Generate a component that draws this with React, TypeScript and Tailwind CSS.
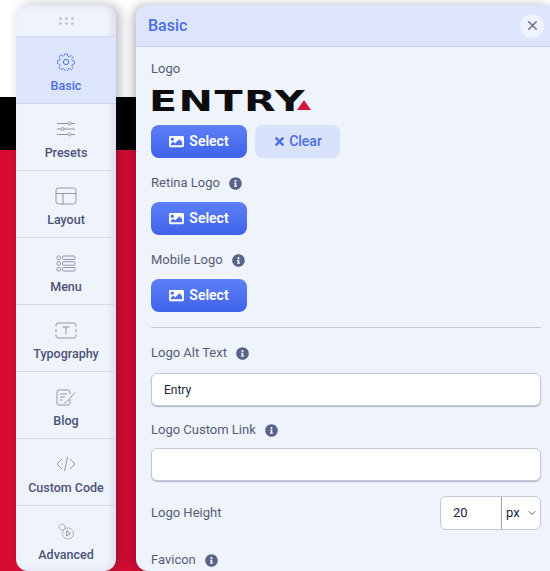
import React from 'react';
import { ChevronDown, X } from 'lucide-react';
import { FaImage, FaInfoCircle, FaTimes } from 'react-icons/fa';

const stroke = { fill: 'none', stroke: 'currentColor', strokeWidth: 1 };

const GearIcon = () => (
  <svg width="18" height="18" viewBox="0 0 18 18" {...stroke}>
    <circle cx="9" cy="9" r="2.6" />
    <path
      strokeDasharray="2 0.6"
      d="M7.6 1h2.8l.4 2.2 1.4.6 1.9-1.3 2 2-1.3 1.9.6 1.4 2.1.4v2.8l-2.1.4-.6 1.4 1.3 1.9-2 2-1.9-1.3-1.4.6-.4 2.1H7.6l-.4-2.1-1.4-.6-1.9 1.3-2-2 1.3-1.9-.6-1.4L.5 10.4V7.6l2.1-.4.6-1.4-1.3-1.9 2-2 1.9 1.3 1.4-.6z"
    />
  </svg>
);

const PresetsIcon = () => (
  <svg width="20" height="16" viewBox="0 0 20 16" {...stroke}>
    <path d="M1 2.500h11M15 2.500h4M1 8h4M8 8h11M1 13.500h11M15 13.500h4" />
    <circle cx="13.500" cy="2.500" r="1.500" />
    <circle cx="6.500" cy="8" r="1.500" />
    <circle cx="13.500" cy="13.500" r="1.500" />
  </svg>
);

const LayoutIcon = () => (
  <svg width="22" height="18" viewBox="0 0 22 18" {...stroke}>
    <rect x="1" y="1" width="20" height="16" rx="2.500" />
    <path d="M1 6.500h20M8 6.500V17" />
  </svg>
);

const MenuIcon = () => (
  <svg width="20" height="17" viewBox="0 0 20 17" {...stroke}>
    <rect x="1" y="1" width="3.500" height="3.500" rx="1" />
    <rect x="1" y="6.700" width="3.500" height="3.500" rx="1" />
    <rect x="1" y="12.500" width="3.500" height="3.500" rx="1" />
    <rect x="6.500" y="1" width="12.500" height="3.500" rx="1" />
    <rect x="6.500" y="6.700" width="12.500" height="3.500" rx="1" />
    <rect x="6.500" y="12.500" width="12.500" height="3.500" rx="1" />
  </svg>
);

const TypographyIcon = () => (
  <svg width="22" height="17" viewBox="0 0 22 17" {...stroke}>
    <path d="M1 4.500V3a2 2 0 0 1 2-2h16a2 2 0 0 1 2 2v1.500M1 7v3M21 7v3M1 12.500V14a2 2 0 0 0 2 2h16a2 2 0 0 0 2-2v-1.500" />
    <path d="M7.500 5h7M11 5v7.500" />
  </svg>
);

const BlogIcon = () => (
  <svg width="20" height="17" viewBox="0 0 20 17" {...stroke}>
    <path d="M14 10.500V14a2 2 0 0 1-2 2H3a2 2 0 0 1-2-2V3a2 2 0 0 1 2-2h9a2 2 0 0 1 2 2v2" />
    <path d="M4 5h7M4 8h5M4 11h2.500M8.500 14l2-1L19 3.500" />
  </svg>
);

const CodeIcon = () => (
  <svg width="20" height="16" viewBox="0 0 20 16" {...stroke}>
    <path d="M6 3L1 8l5 5M14 3l5 5-5 5M11.500 1L8.500 15" />
  </svg>
);

const AdvancedIcon = () => (
  <svg width="16" height="17" viewBox="0 0 16 17" {...stroke}>
    <circle cx="4" cy="4" r="3" strokeDasharray="1.500 0.500" />
    <circle cx="10" cy="10.500" r="5.500" strokeDasharray="1.500 0.500" />
    <path d="M8.500 8l4 2.500-4 2.500z" />
  </svg>
);

const navItems = [
  { label: 'Basic', icon: <GearIcon />, active: true },
  { label: 'Presets', icon: <PresetsIcon /> },
  { label: 'Layout', icon: <LayoutIcon /> },
  { label: 'Menu', icon: <MenuIcon /> },
  { label: 'Typography', icon: <TypographyIcon /> },
  { label: 'Blog', icon: <BlogIcon /> },
  { label: 'Custom Code', icon: <CodeIcon /> },
  { label: 'Advanced', icon: <AdvancedIcon /> },
];

const SelectButton = () => (
  <button className="flex h-[33px] w-24 items-center justify-center gap-[5px] rounded-lg bg-gradient-to-b from-[#5d7ff7] to-[#3f63ea] text-[14px] font-semibold text-white">
    <FaImage size={15} />
    Select
  </button>
);

const FieldLabel = ({ text, info }: { text: string; info?: boolean }) => (
  <div className="flex h-5 items-center gap-[9px] text-[13px] text-[#565d78]">
    {text}
    {info && <FaInfoCircle size={13} className="text-[#5a6489]" />}
  </div>
);

const TextField = ({ value }: { value?: string }) => (
  <div className="flex h-[33px] items-center rounded-md border border-[#c3c9da] bg-white px-3 text-[12px] text-[#1c2340] shadow-[0_1px_1px_rgba(70,80,120,0.35)]">
    {value}
  </div>
);

export default function App() {
  return (
    <div className="relative h-[571px] w-[550px] overflow-hidden bg-white font-['Roboto',sans-serif]">
      {/* page behind the panels */}
      <div className="absolute inset-0 flex flex-col">
        <div className="h-[97px] bg-white" />
        <div className="h-[53px] bg-black" />
        <div className="flex-1 bg-[#d80c33]" />
      </div>

      <div className="relative flex h-full gap-5 pl-4 pt-[5px]">
        {/* sidebar */}
        <nav className="flex h-[566px] w-[100px] shrink-0 flex-col overflow-hidden rounded-xl bg-[#eff3fc] shadow-[4px_0_12px_rgba(20,20,50,0.3),inset_-4px_0_6px_rgba(70,80,120,0.12)]">
          <div className="flex h-8 shrink-0 items-center justify-center border-b border-[#d5daea]">
            <div className="grid grid-cols-3 gap-x-[3px] gap-y-[2px]">
              {[0, 1, 2, 3, 4, 5].map(i => (
                <span key={i} className="h-[3px] w-[3px] rounded-full bg-[#c3c9da]" />
              ))}
            </div>
          </div>
          {navItems.map(item => (
            <div
              key={item.label}
              className={
                item.active
                  ? 'flex h-[67px] shrink-0 flex-col items-center gap-[6px] border-b border-[#c9d2ea] bg-[#dce5fb] pt-[15px] text-[#4a6ee6]'
                  : 'flex h-[67px] shrink-0 flex-col items-center gap-[6px] border-b border-[#d5daea] pt-[15px] text-[#4b5277]'
              }
            >
              <span className={item.active ? 'flex h-[20px] items-center' : 'flex h-[20px] items-center text-[#9096ad]'}>
                {item.icon}
              </span>
              <span className="text-[12.500px] font-medium leading-[16px]">{item.label}</span>
            </div>
          ))}
        </nav>

        {/* settings panel */}
        <section className="flex h-[566px] flex-1 flex-col rounded-l-xl bg-[#eff3fc] shadow-[-3px_0_10px_rgba(20,20,50,0.3)]">
          <header className="flex h-[42px] shrink-0 items-center justify-between rounded-tl-xl border-b border-[#c9d2ea] bg-[#dce5fb] pl-3 pr-[6px]">
            <h2 className="pt-px text-[16px] font-medium text-[#4a6ee6]">Basic</h2>
            <button className="flex h-6 w-6 items-center justify-center rounded-full bg-[#eff3fc] text-[#6f7596]">
              <X size={15} strokeWidth={2.5} />
            </button>
          </header>

          <div className="flex flex-col pl-[15px] pr-[9px] pt-3">
            <FieldLabel text="Logo" />
            <div className="mt-[9px] flex h-[22px] items-end">
              <span className="-ml-[2px] inline-block w-[101px] origin-left scale-x-[1.42] font-['DejaVu_Sans',sans-serif] text-[29px] font-bold leading-[17px] tracking-[1px] text-[#0d0d10]">
                ENTRY
              </span>
              <svg width="14" height="10" viewBox="0 0 14 10" className="ml-[47px]">
                <path d="M7 0l7 10H0z" fill="#d2173f" />
              </svg>
            </div>
            <div className="mt-[15px] flex gap-2">
              <SelectButton />
              <button className="flex h-[33px] w-[85px] items-center justify-center gap-[3px] rounded-lg bg-[#d8e2fb] text-[14px] font-medium text-[#4a6ee6]">
                <FaTimes size={13} />
                Clear
              </button>
            </div>

            <div className="mt-[15px]"><FieldLabel text="Retina Logo" info /></div>
            <div className="mt-[9px]"><SelectButton /></div>

            <div className="mt-[15px]"><FieldLabel text="Mobile Logo" info /></div>
            <div className="mt-[9px]"><SelectButton /></div>

            <div className="mt-[15px] h-px bg-[#c3c9da]" />

            <div className="mt-[15px]"><FieldLabel text="Logo Alt Text" info /></div>
            <div className="mt-[10px]"><TextField value="Entry" /></div>

            <div className="mt-[14px]"><FieldLabel text="Logo Custom Link" info /></div>
            <div className="mt-[8px]"><TextField /></div>

            <div className="mt-[15px] flex h-[34px] items-center justify-between">
              <FieldLabel text="Logo Height" />
              <div className="flex h-[34px] w-[101px] overflow-hidden rounded-md border border-[#c3c9da] bg-white text-[13px] text-[#1c2340]">
                <div className="flex w-[61px] items-center border-r border-[#9ea5bb] pl-3">20</div>
                <div className="flex flex-1 items-center justify-between pl-[4px] pr-[2px]">
                  px
                  <ChevronDown size={12} className="text-[#565d78]" />
                </div>
              </div>
            </div>

            <div className="mt-5"><FieldLabel text="Favicon" info /></div>
          </div>
        </section>
      </div>
    </div>
  );
}
